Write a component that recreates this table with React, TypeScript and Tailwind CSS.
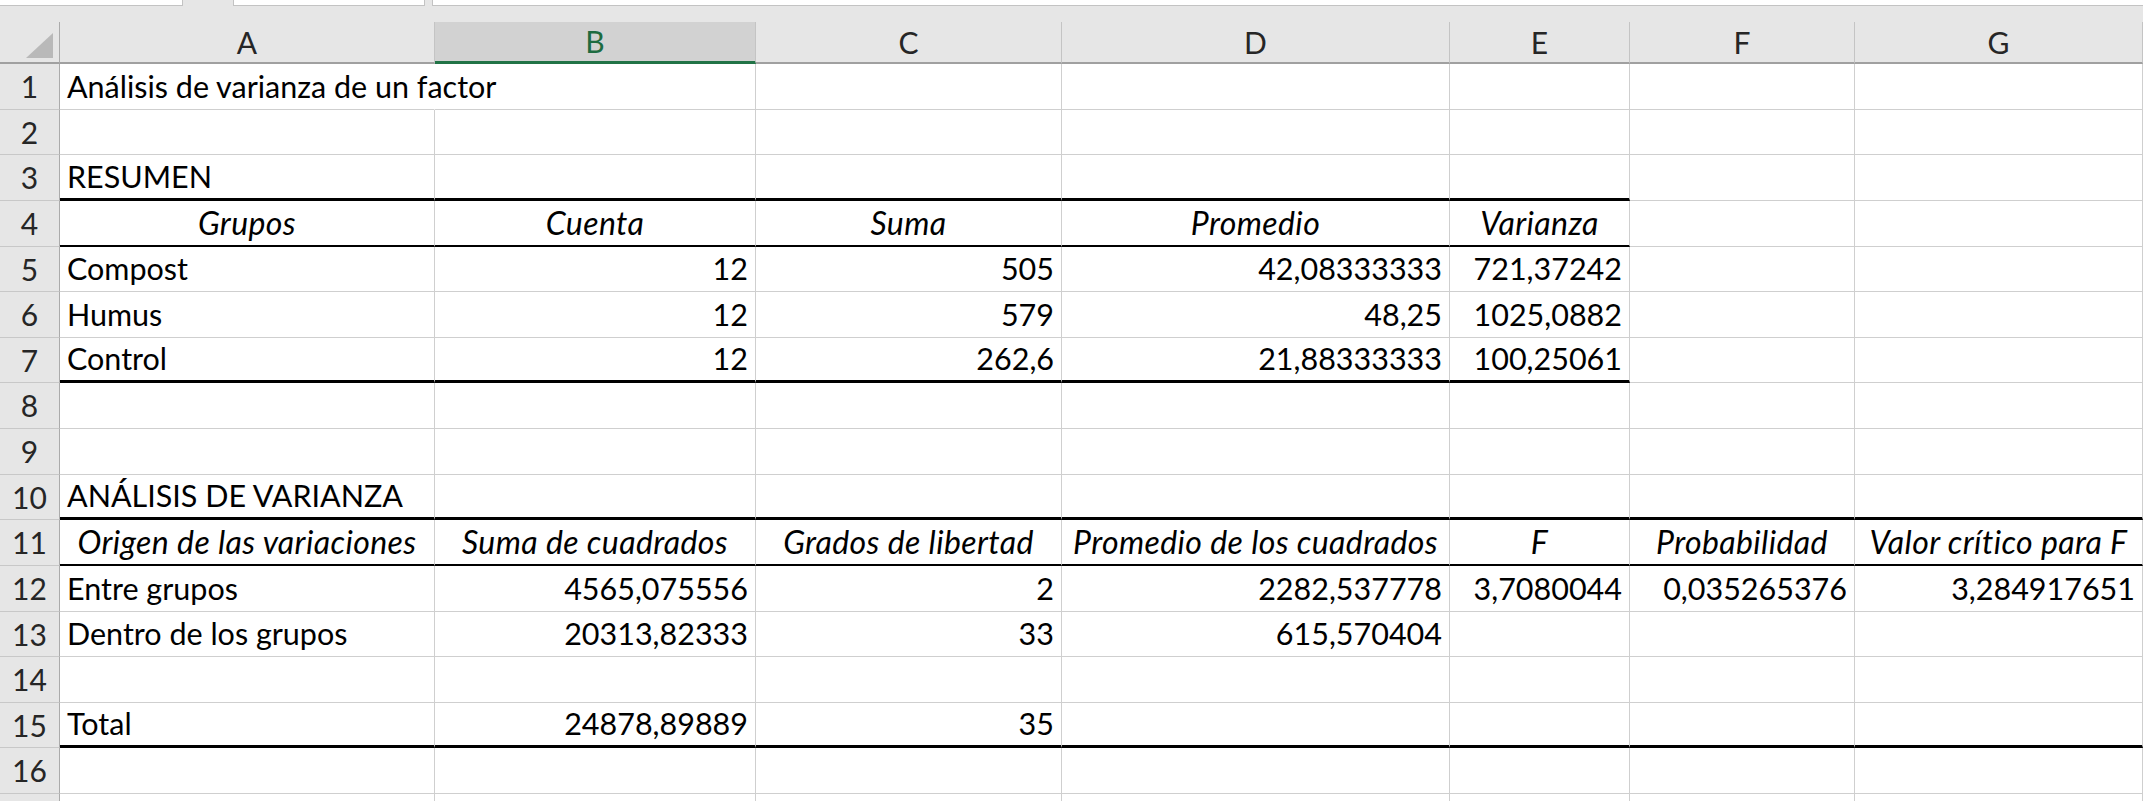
import React from 'react';

type Align = 'l' | 'r' | 'c';
type CellData = { t: string; a: Align; i?: boolean };
type RowData = { n: number; h: string; cells: CellData[]; line?: 'thick' | 'med'; span?: number; hideNum?: boolean };

const colW = ['w-[375px]', 'w-[321px]', 'w-[306px]', 'w-[388px]', 'w-[180px]', 'w-[225px]', 'w-[288px]'];
const letters = ['A', 'B', 'C', 'D', 'E', 'F', 'G'];

const tx = (t: string, a: Align = 'r'): CellData => ({ t, a });
const hd = (t: string): CellData => ({ t, a: 'c', i: true });

const rows: RowData[] = [
  { n: 1, h: 'h-[46px]', cells: [tx('Análisis de varianza de un factor', 'l')] },
  { n: 2, h: 'h-[45px]', cells: [] },
  { n: 3, h: 'h-[46px]', cells: [tx('RESUMEN', 'l')], line: 'thick', span: 5 },
  { n: 4, h: 'h-[46px]', cells: [hd('Grupos'), hd('Cuenta'), hd('Suma'), hd('Promedio'), hd('Varianza')], line: 'med', span: 5 },
  { n: 5, h: 'h-[45px]', cells: [tx('Compost', 'l'), tx('12'), tx('505'), tx('42,08333333'), tx('721,37242')] },
  { n: 6, h: 'h-[46px]', cells: [tx('Humus', 'l'), tx('12'), tx('579'), tx('48,25'), tx('1025,0882')] },
  { n: 7, h: 'h-[45px]', cells: [tx('Control', 'l'), tx('12'), tx('262,6'), tx('21,88333333'), tx('100,25061')], line: 'thick', span: 5 },
  { n: 8, h: 'h-[46px]', cells: [] },
  { n: 9, h: 'h-[46px]', cells: [] },
  { n: 10, h: 'h-[45px]', cells: [tx('ANÁLISIS DE VARIANZA', 'l')], line: 'thick', span: 7 },
  {
    n: 11,
    h: 'h-[46px]',
    cells: [
      hd('Origen de las variaciones'),
      hd('Suma de cuadrados'),
      hd('Grados de libertad'),
      hd('Promedio de los cuadrados'),
      hd('F'),
      hd('Probabilidad'),
      hd('Valor crítico para F'),
    ],
    line: 'med',
    span: 7,
  },
  {
    n: 12,
    h: 'h-[46px]',
    cells: [tx('Entre grupos', 'l'), tx('4565,075556'), tx('2'), tx('2282,537778'), tx('3,7080044'), tx('0,035265376'), tx('3,284917651')],
  },
  { n: 13, h: 'h-[45px]', cells: [tx('Dentro de los grupos', 'l'), tx('20313,82333'), tx('33'), tx('615,570404')] },
  { n: 14, h: 'h-[46px]', cells: [] },
  { n: 15, h: 'h-[45px]', cells: [tx('Total', 'l'), tx('24878,89889'), tx('35')], line: 'thick', span: 7 },
  { n: 16, h: 'h-[46px]', cells: [] },
  { n: 17, h: 'h-[46px]', cells: [], hideNum: true },
];

function Cell({ cell, w, line, noRight }: { cell?: CellData; w: string; line?: 'thick' | 'med'; noRight?: boolean }) {
  const justify = cell?.a === 'l' ? 'justify-start' : cell?.a === 'c' ? 'justify-center' : 'justify-end';
  const bottom =
    line === 'thick'
      ? 'border-b-[3px] border-b-black'
      : line === 'med'
        ? 'border-b-2 border-b-black'
        : 'border-b border-b-[#cfcfcf]';
  return (
    <div
      className={`${w} h-full shrink-0 flex items-center ${justify} px-[7px] border-r ${noRight ? 'border-r-transparent' : 'border-r-[#cfcfcf]'} ${bottom} whitespace-nowrap`}
    >
      {cell?.i ? <span className="italic text-[32px] tracking-[0.4px]">{cell.t}</span> : cell?.t}
    </div>
  );
}

export default function App() {
  return (
    <div className="w-[2143px] h-[801px] overflow-hidden bg-white font-['Lato',sans-serif] text-[30.5px] text-black">
      {/* formula bar remnants */}
      <div className="h-[22px] bg-[#e6e6e6] flex items-start">
        <div className="w-[183px] h-[6px] bg-white border-b border-r border-[#c3c3c3]" />
        <div className="w-[50px]" />
        <div className="w-[192px] h-[6px] bg-white border-b border-x border-[#c3c3c3]" />
        <div className="w-[7px]" />
        <div className="flex-1 h-[6px] bg-white border-b border-l border-[#c3c3c3]" />
      </div>

      {/* column headers */}
      <div className="h-[42px] flex bg-[#e6e6e6] text-[#262626] text-[30px]">
        <div className="w-[60px] h-full shrink-0 relative border-r border-r-[#ababab] border-b-2 border-b-[#a0a0a0]">
          <svg className="absolute left-0 top-0" width="60" height="42" viewBox="0 0 60 42">
            <polygon points="53,11 53,36 26,36" fill="#b9b9b9" />
          </svg>
        </div>
        {letters.map((l, i) => (
          <div
            key={l}
            className={`${colW[i]} h-full shrink-0 flex items-center justify-center border-r border-r-[#c4c4c4] ${
              l === 'B' ? 'bg-[#d2d2d2] text-[#1d6b40] border-b-[3px] border-b-[#217346]' : 'border-b-2 border-b-[#a0a0a0]'
            }`}
          >
            {l}
          </div>
        ))}
      </div>

      {/* rows */}
      {rows.map((r) => (
        <div key={r.n} className={`${r.h} flex`}>
          <div className="w-[60px] h-full shrink-0 flex items-center justify-center bg-[#e6e6e6] text-[#262626] text-[30px] border-r border-r-[#ababab] border-b border-b-[#c8c8c8]">
            {r.hideNum ? '' : r.n}
          </div>
          {colW.map((w, i) => (
            <Cell
              key={i}
              w={w}
              cell={r.cells[i]}
              line={r.line && i < (r.span ?? 0) ? r.line : undefined}
              noRight={r.n === 1 && i === 0}
            />
          ))}
        </div>
      ))}
    </div>
  );
}
